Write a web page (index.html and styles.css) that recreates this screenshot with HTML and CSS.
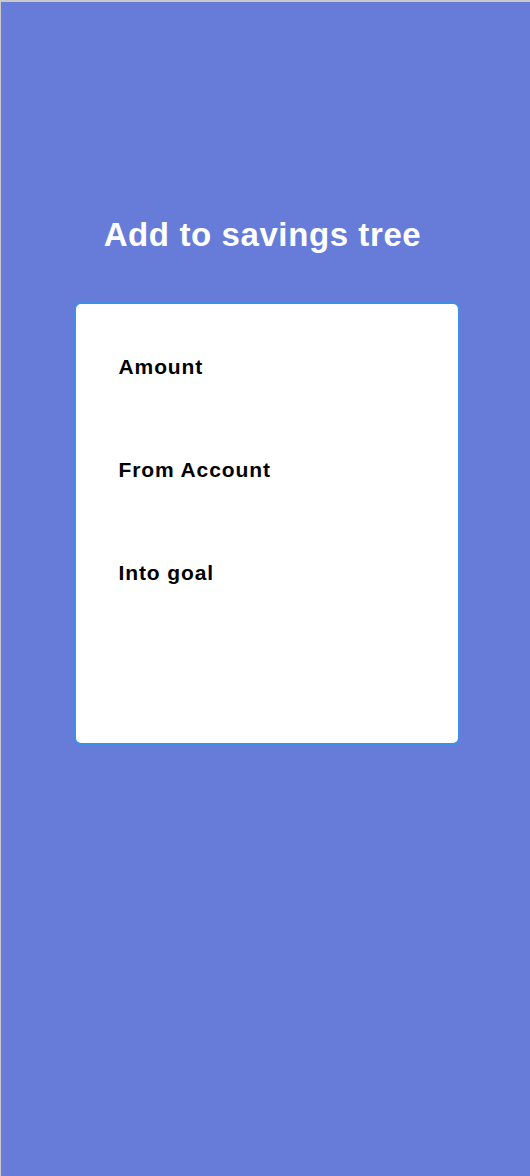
FILE: index.html
```html
<!DOCTYPE html>
<html lang="en">
<head>
  <meta charset="UTF-8">
  <meta name="viewport" content="width=device-width, initial-scale=1.0">
  <title>Add to savings tree</title>
  <link rel="stylesheet" href="styles.css">
</head>
<body>
  <div class="page">
    <h1 class="heading">Add to savings tree</h1>
    <form class="card" onsubmit="event.preventDefault();">
      <label class="field-label">Amount</label>
      <label class="field-label">From Account</label>
      <label class="field-label">Into goal</label>
    </form>
  </div>
</body>
</html>
```

FILE: styles.css
```css
html, body {
  margin: 0;
  height: 100%;
}
body {
  font-family: "Liberation Sans", Arial, sans-serif;
  background: #667cd8;
  border-top: 2px solid #c9c9c9;
  border-left: 1px solid #c9c9c9;
  box-sizing: border-box;
}
.page {
  display: flex;
  flex-direction: column;
  align-items: center;
  padding-top: 211px;
}
.heading {
  margin: 0 0 45px;
  padding-right: 6px;
  color: #fff;
  font-size: 33px;
  font-weight: bold;
  line-height: 44px;
  letter-spacing: 0.6px;
}
.card {
  box-sizing: border-box;
  width: 386px;
  height: 443px;
  margin-left: 2px;
  padding: 51px 40px 0 43px;
  background: #fff;
  border: 2px solid #3d8ee9;
  border-radius: 7px;
  display: flex;
  flex-direction: column;
  gap: 79px;
}
.field-label {
  color: #000;
  font-size: 21px;
  font-weight: bold;
  line-height: 24px;
  letter-spacing: 0.9px;
}
```
